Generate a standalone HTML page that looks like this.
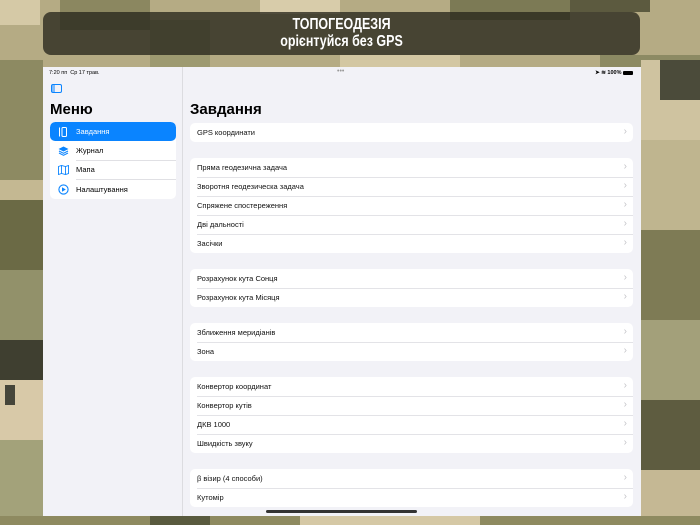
<!DOCTYPE html>
<html><head><meta charset="utf-8"><style>
*{margin:0;padding:0;box-sizing:border-box}
body{width:700px;height:525px;overflow:hidden;position:relative;font-family:"Liberation Sans",sans-serif;background:#b9ae86}
#camo{position:absolute;left:0;top:0}
.banner{position:absolute;left:43px;top:12px;width:597px;height:43px;background:rgba(40,38,28,.78);border-radius:8px;color:#fff;text-align:center;font-weight:bold;font-size:16px;line-height:17px;padding-top:4px}
.banner div{transform:scaleX(.78)}
.screen{position:absolute;left:43px;top:67px;width:598px;height:449px;background:#f2f2f7;overflow:hidden}
.side{position:absolute;left:0;top:0;width:140px;height:449px;background:#f2f2f7;border-right:1px solid #dcdce0}
.status{position:absolute;top:3px;font-size:5.5px;color:#000}
.h1{position:absolute;font-size:15px;font-weight:bold;color:#000}
.sg{position:absolute;left:7px;top:55px;width:126px;height:77px;background:#fff;border-radius:5px;overflow:hidden}
.si{height:19.25px;display:flex;align-items:center;font-size:7.5px;color:#000;position:relative}
.si.sel{background:#0a84ff;color:#fff;border-radius:5px}
.si .ic{width:26px;display:flex;justify-content:center}
.si .lb{flex:1;height:100%;display:flex;align-items:center;border-bottom:.6px solid #e0e0e4}
.si:last-child .lb,.si.sel .lb{border-bottom:none}
.grp{position:absolute;left:147px;width:443px;background:#fff;border-radius:5px;overflow:hidden}
.row{height:19px;display:flex;align-items:center;padding-left:7px;font-size:7.5px;color:#111;position:relative}
.row+.row::before{content:"";position:absolute;left:7px;right:0;top:0;border-top:.6px solid #e3e3e7}
.row::after{content:"›";position:absolute;right:6px;top:3px;font-size:10px;color:#c4c4c8}
.home{position:absolute;left:223px;top:443px;width:151px;height:3px;background:#333;border-radius:2px}
</style></head><body>
<svg id="camo" width="700" height="525">
<rect width="700" height="525" fill="#c4b892"/>
<rect x="0" y="0" width="700" height="67" fill="#b5ab84"/>
<rect x="0" y="0" width="40" height="25" fill="#d5c9a6"/>
<rect x="60" y="0" width="90" height="30" fill="#8b8760"/>
<rect x="150" y="20" width="60" height="47" fill="#9d9a70"/>
<rect x="260" y="0" width="80" height="14" fill="#d8ccaa"/>
<rect x="340" y="55" width="120" height="12" fill="#d3c7a2"/>
<rect x="450" y="0" width="120" height="20" fill="#7c7a55"/>
<rect x="570" y="0" width="80" height="12" fill="#5c5a3f"/>
<rect x="600" y="55" width="100" height="12" fill="#8c8a63"/>
<rect x="0" y="60" width="43" height="120" fill="#8d8a62"/>
<rect x="0" y="200" width="43" height="70" fill="#6b6a45"/>
<rect x="0" y="270" width="43" height="80" fill="#92916a"/>
<rect x="0" y="340" width="43" height="40" fill="#3f3f30"/>
<rect x="0" y="380" width="43" height="60" fill="#d8c9a8"/>
<rect x="0" y="440" width="43" height="85" fill="#a3a27a"/>
<rect x="5" y="385" width="10" height="20" fill="#45453a"/>
<rect x="641" y="60" width="59" height="80" fill="#cfc3a0"/>
<rect x="660" y="60" width="40" height="40" fill="#4b4b3a"/>
<rect x="641" y="140" width="59" height="90" fill="#bfb58f"/>
<rect x="641" y="230" width="59" height="90" fill="#7e7b55"/>
<rect x="641" y="320" width="59" height="80" fill="#a3a07a"/>
<rect x="641" y="400" width="59" height="70" fill="#5e5c40"/>
<rect x="641" y="470" width="59" height="55" fill="#c5b894"/>
<rect x="0" y="516" width="700" height="9" fill="#8e8a60"/>
<rect x="300" y="516" width="180" height="9" fill="#d5c8a5"/>
<rect x="150" y="516" width="60" height="9" fill="#595a3e"/>
</svg>
<div class="banner"><div>ТОПОГЕОДЕЗІЯ</div><div>орієнтуйся без GPS</div></div>
<div class="screen">
 <div class="side">
  <div class="status" style="left:6px">7:20 пп&nbsp; Ср 17 трав.</div>
  <svg style="position:absolute;left:8px;top:17px" width="11" height="9"><rect x=".5" y=".5" width="10" height="8" rx="1.5" fill="none" stroke="#0a84ff"/><rect x="1" y="1" width="3" height="7" fill="#0a84ff" opacity=".5"/></svg>
  <div class="h1" style="left:7px;top:34px">Меню</div>
  <div class="sg">
   <div class="si sel"><div class="ic"><svg width="10" height="10"><rect x="1" y="0.5" width="1" height="9" fill="#fff"/><rect x="4" y=".5" width="4.5" height="9" rx="1" fill="none" stroke="#fff"/></svg></div><div class="lb">Завдання</div></div>
   <div class="si"><div class="ic"><svg width="11" height="10"><path d="M5.5 .5L10.5 3 5.5 5.5.5 3z" fill="#0a84ff"/><path d="M1 5l4.5 2.3L10 5M1 7l4.5 2.3L10 7" fill="none" stroke="#0a84ff"/></svg></div><div class="lb">Журнал</div></div>
   <div class="si"><div class="ic"><svg width="11" height="10"><path d="M.5 1.5l3-1 4 1 3-1v8l-3 1-4-1-3 1z M3.5 .5v8 M7.5 1.5v8" fill="none" stroke="#0a84ff" stroke-width=".9"/></svg></div><div class="lb">Мапа</div></div>
   <div class="si"><div class="ic"><svg width="11" height="11"><circle cx="5.5" cy="5.5" r="4.6" fill="none" stroke="#0a84ff" stroke-width="1.1"/><path d="M4 3.2v4.6l3.8-2.3z" fill="#0a84ff"/></svg></div><div class="lb">Налаштування</div></div>
  </div>
 </div>
 <div class="status" style="left:294px;top:1px;color:#999;font-size:7px">•••</div>
 <div class="status" style="right:8px;font-weight:bold">➤ ≋ 100% <span style="display:inline-block;width:10px;height:4px;background:#000;border-radius:1px;vertical-align:middle"></span></div>
 <div class="h1" style="left:147px;top:34px">Завдання</div>
 <div class="grp" style="top:56px"><div class="row">GPS координати</div></div>
 <div class="grp" style="top:91px"><div class="row">Пряма геодезична задача</div><div class="row">Зворотня геодезическа задача</div><div class="row">Спряжене спостереження</div><div class="row">Дві дальності</div><div class="row">Засічки</div></div>
 <div class="grp" style="top:202px"><div class="row">Розрахунок кута Сонця</div><div class="row">Розрахунок кута Місяця</div></div>
 <div class="grp" style="top:256px"><div class="row">Зближення меридіанів</div><div class="row">Зона</div></div>
 <div class="grp" style="top:310px"><div class="row">Конвертор координат</div><div class="row">Конвертор кутів</div><div class="row">ДКВ 1000</div><div class="row">Швидкість звуку</div></div>
 <div class="grp" style="top:402px"><div class="row">β візир (4 способи)</div><div class="row">Кутомір</div></div>
 <div class="home"></div>
</div>
</body></html>
